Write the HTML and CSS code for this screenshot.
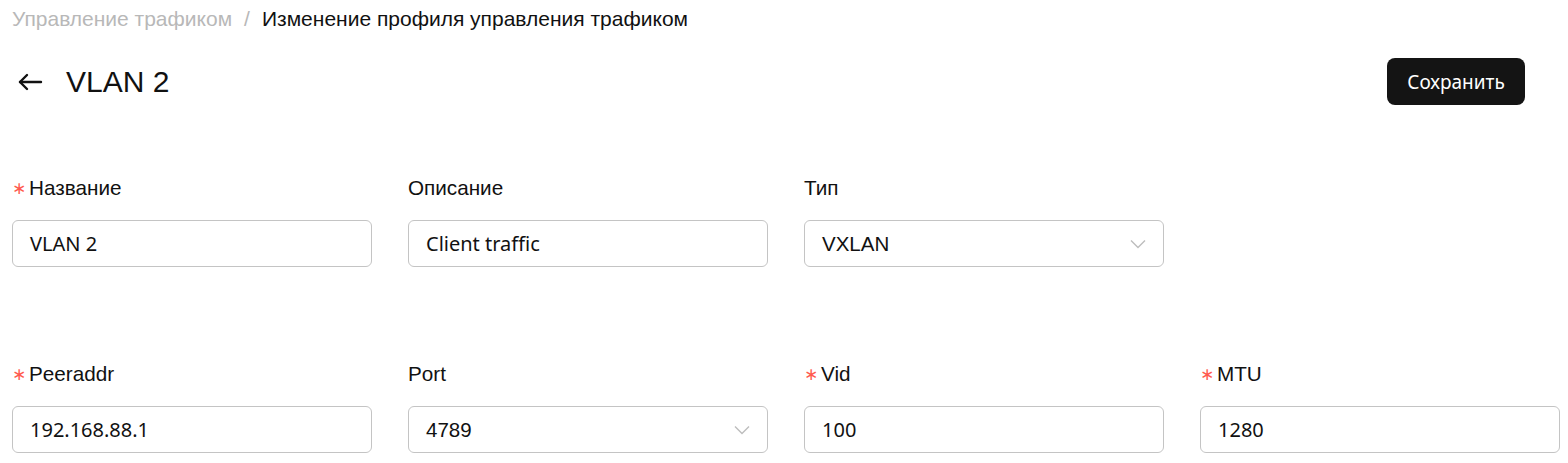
FILE: index.html
```html
<!DOCTYPE html>
<html lang="ru">
<head>
<meta charset="utf-8">
<link rel="stylesheet" href="styles.css">
</head>
<body>
<div class="page">
  <nav class="breadcrumb">
    <span class="crumb-muted">Управление трафиком</span>
    <span class="sep">/</span>
    <span class="crumb-current">Изменение профиля управления трафиком</span>
  </nav>
  <header class="title-row">
    <div class="title-left">
      <svg class="back" width="26" height="18" viewBox="0 0 26 18" fill="none" stroke="#111" stroke-width="2.4" stroke-linecap="round" stroke-linejoin="round">
        <path d="M24 9H3"/>
        <path d="M10 2L3 9L10 16"/>
      </svg>
      <h1 class="title">VLAN 2</h1>
    </div>
    <button class="save">Сохранить</button>
  </header>
  <form class="form">
    <div class="row">
      <div class="field">
        <label class="label"><span class="req">∗</span>Название</label>
        <div class="input"><span class="value">VLAN 2</span></div>
      </div>
      <div class="field">
        <label class="label">Описание</label>
        <div class="input"><span class="value">Client traffic</span></div>
      </div>
      <div class="field">
        <label class="label">Тип</label>
        <div class="input select"><span class="value sel">VXLAN</span>
          <svg class="chev" width="16" height="10" viewBox="0 0 16 10" fill="none" stroke="#bdbdbd" stroke-width="1.4"><path d="M1 1.5L8 8.5L15 1.5"/></svg>
        </div>
      </div>
      <div class="field"></div>
    </div>
    <div class="row">
      <div class="field">
        <label class="label"><span class="req">∗</span>Peeraddr</label>
        <div class="input"><span class="value">192.168.88.1</span></div>
      </div>
      <div class="field">
        <label class="label">Port</label>
        <div class="input select"><span class="value sel">4789</span>
          <svg class="chev" width="16" height="10" viewBox="0 0 16 10" fill="none" stroke="#bdbdbd" stroke-width="1.4"><path d="M1 1.5L8 8.5L15 1.5"/></svg>
        </div>
      </div>
      <div class="field">
        <label class="label"><span class="req">∗</span>Vid</label>
        <div class="input"><span class="value">100</span></div>
      </div>
      <div class="field">
        <label class="label"><span class="req">∗</span>MTU</label>
        <div class="input"><span class="value">1280</span></div>
      </div>
    </div>
  </form>
</div>
</body>
</html>
```

FILE: styles.css
```css
* { box-sizing: border-box; }
html, body { margin: 0; padding: 0; background: #fff; }
body { font-family: "Liberation Sans", Arial, sans-serif; color: #111; }
.page { padding: 8px 8px 0 12px; }
.breadcrumb { font-size: 21px; line-height: 22px; display: flex; gap: 12px; }
.crumb-muted { color: #b8b8b8; }
.sep { color: #b8b8b8; }
.crumb-current { color: #111; }
.title-row { display: flex; justify-content: space-between; align-items: center; margin-top: 28px; padding-right: 35px; height: 47px; }
.title-left { display: flex; align-items: center; gap: 23px; padding-left: 5px; }
.back { display: block; }
.title { margin: 0; font-weight: 400; font-size: 30px; line-height: 36px; color: #111; }
.save { background: #141414; color: #fff; border: none; border-radius: 8px; height: 47px; width: 138px; font-family: "Noto Sans", "Open Sans", sans-serif; font-size: 19px; padding: 0; }
.form { margin-top: 71px; display: flex; flex-direction: column; gap: 95px; }
.row { display: grid; grid-template-columns: repeat(4, 360px); column-gap: 36px; }
.label { display: flex; align-items: center; height: 24px; font-size: 20.7px; color: #111; margin-bottom: 20px; }
.req { color: #ff5a4f; font-family: "DejaVu Sans", sans-serif; font-size: 17px; width: 17px; }
.input { height: 47px; border: 1px solid #c4c4c4; border-radius: 6px; display: flex; align-items: center; justify-content: space-between; padding: 0 17px 0 17px; }
.value { font-family: "Noto Sans", "Open Sans", sans-serif; font-size: 20px; color: #111; }
.value.sel { font-family: "Liberation Sans", Arial, sans-serif; font-size: 20.5px; }
.chev { display: block; }
```
